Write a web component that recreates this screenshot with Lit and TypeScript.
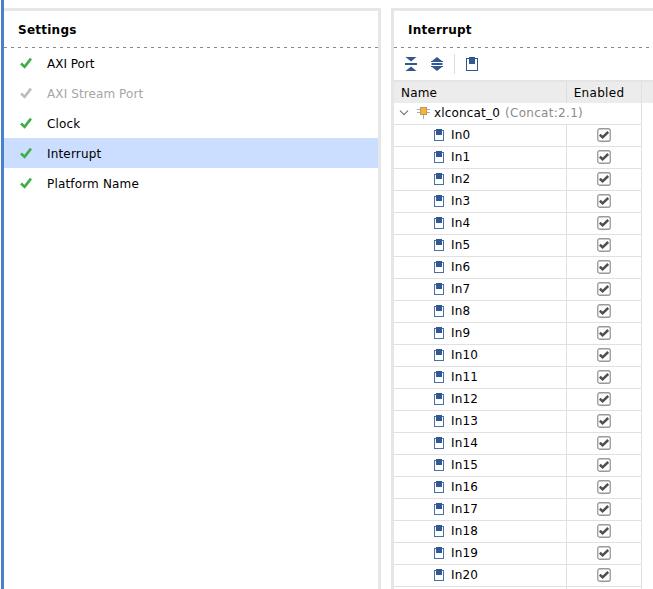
import { LitElement, html, css, svg } from "lit";
import { customElement, property } from "lit/decorators.js";

const check = svg`<path d="M1 6.6L4.6 9.8L11 1.6" fill="none" stroke="currentColor" stroke-width="2.7"/>`;

@customElement("port-icon")
class PortIcon extends LitElement {
  @property({ type: Boolean }) large = false;
  static styles = css`
    :host { display: block; line-height: 0; }
    svg { display: block; }
  `;
  render() {
    return this.large
      ? html`<svg width="12" height="14" shape-rendering="crispEdges"><path d="M0 1H12V14H0ZM1 2V13H11V2Z" fill="#335891" fill-rule="evenodd"/><rect x="3" y="0" width="6" height="7" fill="#335891"/></svg>`
      : html`<svg width="10" height="12" shape-rendering="crispEdges"><path d="M0 1H10V12H0ZM1 2V11H9V2Z" fill="#4a70a8" fill-rule="evenodd"/><rect x="2" y="0" width="6" height="6" fill="#335891"/></svg>`;
  }
}

@customElement("app-root")
class AppRoot extends LitElement {
  static styles = css`
    :host {
      display: block; height: 589px; overflow: hidden; background: #fff;
      font-family: "DejaVu Sans", sans-serif; font-size: 12px; letter-spacing: .17px; color: #000;
    }
    * { box-sizing: border-box; }
    svg { display: block; }
    .window { display: flex; height: 589px; margin-left: 1px; border-left: 3px solid #4a7fcd; padding-top: 8px; }
    .settings { width: 377px; border-top: 3px solid #e6e6e6; border-right: 3px solid #e6e6e6; }
    .detail { flex: 1; min-width: 0; margin-left: 10px; border-top: 3px solid #e6e6e6; border-left: 3px solid #e6e6e6; overflow: hidden; }
    .title { height: 37px; padding: 0 14px; line-height: 38px; font-weight: bold; letter-spacing: .25px;
      background: repeating-linear-gradient(90deg, #888 0 3px, #fff 3px 7px) bottom / 100% 1px no-repeat; }
    .item { display: flex; align-items: center; height: 30px; padding-left: 16px; }
    .item span { margin-left: 15px; padding-top: 2px; }
    .item svg { color: #3fae49; }
    .item.available { letter-spacing: 0; }
    .item.disabled { letter-spacing: .1px; }
    .item.disabled svg { color: #bdbdbd; }
    .item.disabled span { color: #a6a6a6; }
    .item.selected { background: #ccdeff; }
    .toolbar { display: flex; align-items: center; height: 32px; padding-left: 11px; }
    .expand { margin-left: 14px; }
    .rule { width: 1px; height: 20px; background: #dcdcdc; margin: 0 11px; }
    .head { display: flex; height: 23px; border-top: 2px solid #e4e4e4; background: #ececec; line-height: 22px; }
    .name { display: flex; align-items: center; width: 173px; border-right: 1px solid #e0e0e0; }
    .head .name { padding-left: 7px; border-color: #dcdcdc; }
    .enabled { display: flex; align-items: center; justify-content: center; width: 75px; border-right: 1px solid #e0e0e0; }
    .head .enabled { padding-right: 10px; letter-spacing: .3px; }
    .group, .row { display: flex; width: 248px; height: 22px; border-bottom: 1px solid #e0e0e0; }
    .group { align-items: center; padding: 0 0 2px 5px; border-right: 1px solid #e0e0e0; }
    .chip { margin: 0 4px 0 8px; }
    .muted { color: #8c8c8c; margin-left: 5px; letter-spacing: .3px; }
    .row .name { padding: 0 0 2px 40px; }
    .row .enabled { padding-bottom: 2px; }
    .row .name span { margin-left: 7px; }
  `;

  private items = [
    ["AXI Port", "available"], ["AXI Stream Port", "disabled"], ["Clock", ""],
    ["Interrupt", "selected"], ["Platform Name", ""],
  ];

  render() {
    return html`<div class="window">
      <section class="settings">
        <div class="title">Settings</div>
        ${this.items.map(([label, state]) => html`<div class="item ${state}">
          <svg width="12" height="12">${check}</svg><span>${label}</span></div>`)}
      </section>
      <section class="detail">
        <div class="title">Interrupt</div>
        <div class="toolbar">
          <svg width="12" height="14" fill="#335891"><path d="M0.5 0H11.5L6 4.5ZM0 6H12V8H0ZM6 9.5L11.5 14H.5Z"/></svg>
          <svg class="expand" width="12" height="14" fill="#335891"><path d="M6 0L11 4H1ZM.5 6H11.5V8H.5ZM1 10H11L6 14ZM0 4H12V5H0ZM0 9H12V10H0Z"/></svg>
          <div class="rule"></div>
          <port-icon large></port-icon>
        </div>
        <div class="head"><div class="name">Name</div><div class="enabled">Enabled</div></div>
        <div class="group">
          <svg width="10" height="6"><path d="M1 .7L5 4.7L9 .7" fill="none" stroke="#777" stroke-width="1.2"/></svg>
          <svg class="chip" width="13" height="12"><path d="M0 2.5H13M0 5.5H13M6.5 8V12" stroke="#aaa"/><rect x="3.5" y=".5" width="6" height="7" fill="#ffb030" stroke="#b59a6b"/></svg>
          <span>xlconcat_0</span><span class="muted">(Concat:2.1)</span>
        </div>
        ${Array.from({ length: 21 }, (_, i) => html`<div class="row">
          <div class="name"><port-icon></port-icon><span>In${i}</span></div>
          <div class="enabled"><svg width="14" height="14"><rect x=".75" y=".75" width="12.5" height="12.5" rx="2" fill="#fff" stroke="#999" stroke-width="1.3"/><path d="M2.8 6.8L5.6 9.3L11.2 4" fill="none" stroke="#505050" stroke-width="2.5"/></svg></div>
        </div>`)}
        <div class="row"><div class="name"></div><div class="enabled"></div></div>
      </section>
    </div>`;
  }
}
